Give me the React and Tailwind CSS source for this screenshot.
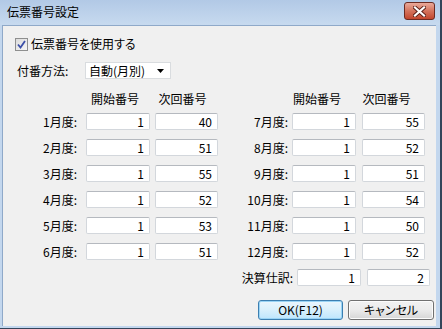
import React from "react";

const left = [
  ["1月度:", 1, 40],
  ["2月度:", 1, 51],
  ["3月度:", 1, 55],
  ["4月度:", 1, 52],
  ["5月度:", 1, 53],
  ["6月度:", 1, 51],
];

const right = [
  ["7月度:", 1, 55],
  ["8月度:", 1, 52],
  ["9月度:", 1, 51],
  ["10月度:", 1, 54],
  ["11月度:", 1, 50],
  ["12月度:", 1, 52],
  ["決算仕訳:", 1, 2],
];

const NumBox = ({ value, w }) => (
  <div
    className={`${w} h-[17px] bg-white border border-[#d3d7dc] border-t-[#b5b9bf] rounded-[2px] text-right pr-[5px] text-[12px] leading-[15px]`}
  >
    {value}
  </div>
);

const Row = ({ l, r }) => (
  <div className="flex items-center h-[17px]">
    <div className="w-[74px] text-right text-[12px] leading-[15px]">{l ? l[0] : ""}</div>
    {l ? (
      <>
        <div className="ml-[9px]"><NumBox value={l[1]} w="w-[64px]" /></div>
        <div className="ml-[5px]"><NumBox value={l[2]} w="w-[63px]" /></div>
      </>
    ) : (
      <div className="w-[146px]" />
    )}
    <div className="w-[70px] text-right text-[12px] leading-[15px]">{r[0]}</div>
    <div className="ml-[4px]"><NumBox value={r[1]} w="w-[64px]" /></div>
    <div className="ml-[6px]"><NumBox value={r[2]} w="w-[63px]" /></div>
  </div>
);

export default function App() {
  return (
    <div
      className="w-[442px] h-[329px] flex flex-col bg-[#c3d7ee] border-r-2 border-b border-[#33455a] pl-[2px] pr-[4px] pb-[2px] text-black [font-feature-settings:'palt']"
      style={{ fontFamily: '"Noto Sans CJK JP", "Noto Sans", sans-serif' }}
    >
      {/* タイトルバー */}
      <div className="h-[25px] flex items-center justify-between bg-gradient-to-b from-[#b2c9e6] to-[#c7daef] -ml-[2px] -mr-[4px] pl-[7px] pr-[5px]">
        <span className="text-[12px] leading-[14px] -mt-[1px]">伝票番号設定</span>
        <div className="w-[31px] h-[18px] -mt-[3px] rounded-[3px] border border-[#6b2b22] bg-gradient-to-b from-[#e9a99a] via-[#d4735c] to-[#c2452c] flex items-center justify-center">
          <svg width="13" height="11" viewBox="0 0 13 11">
            <path d="M2 1.5 L11 9.5 M11 1.5 L2 9.5" stroke="#5a2018" strokeWidth="4" strokeLinecap="square" />
            <path d="M2 1.5 L11 9.5 M11 1.5 L2 9.5" stroke="#ffffff" strokeWidth="2.2" strokeLinecap="square" />
          </svg>
        </div>
      </div>

      {/* 本体 */}
      <div className="flex-1 bg-[#f0f0f0] border-l border-t border-[#8fa9c9] flex flex-col">
        <div className="flex items-center mt-[11px] ml-[12px] h-[14px]">
          <div className="w-[13px] h-[13px] border border-[#8e8f8f] bg-gradient-to-br from-[#dcdcdc] to-[#f6f6f6] flex items-center justify-center">
            <svg width="9" height="9" viewBox="0 0 9 9">
              <path d="M1 4.5 L3.5 7.5 L8 1" stroke="#3b4fa8" strokeWidth="1.8" fill="none" />
            </svg>
          </div>
          <span className="ml-[3px] text-[12px] leading-[14px]">伝票番号を使用する</span>
        </div>

        <div className="flex items-center mt-[11px] h-[17px]">
          <span className="ml-[14px] w-[68px] text-[12px] leading-[14px]">付番方法:</span>
          <div className="w-[86px] h-[17px] bg-white border border-[#d9dcdf] flex items-center pl-[3px] pr-[6px] justify-between">
            <span className="text-[12px] leading-[14px]">自動(月別)</span>
            <svg width="7" height="4" viewBox="0 0 7 4">
              <path d="M0 0 H7 L3.5 4 Z" fill="#000" />
            </svg>
          </div>
        </div>

        <div className="flex items-center h-[14px] mt-[13px] text-[12px] leading-[14px] whitespace-nowrap">
          <div className="w-[74px]" />
          <span className="ml-[6px] w-[64px] text-center">開始番号</span>
          <span className="ml-[4px] w-[63px] text-center">次回番号</span>
          <div className="w-[70px]" />
          <span className="ml-[1px] w-[64px] text-center">開始番号</span>
          <span className="ml-[6px] w-[63px] text-center">次回番号</span>
        </div>

        <div className="flex flex-col gap-[9px] mt-[7px]">
          {right.map((r, i) => (
            <Row key={i} l={left[i]} r={r} />
          ))}
        </div>

        <div className="flex justify-end gap-[5px] mt-[14px] pr-[2px]">
          <button className="w-[85px] h-[20px] rounded-[3px] border border-[#3c7fb1] bg-gradient-to-b from-[#eaf6fd] via-[#d9f0fc] to-[#bee6fd] text-[12px] leading-[14px] shadow-[inset_0_0_0_1px_#9ad4f5]">
            OK(F12)
          </button>
          <button className="w-[86px] h-[20px] rounded-[3px] border border-[#707070] bg-gradient-to-b from-[#f2f2f2] via-[#ebebeb] to-[#d6d6d6] text-[12px] leading-[14px] shadow-[inset_0_0_0_1px_#fcfcfc]">
            キャンセル
          </button>
        </div>
      </div>
    </div>
  );
}
